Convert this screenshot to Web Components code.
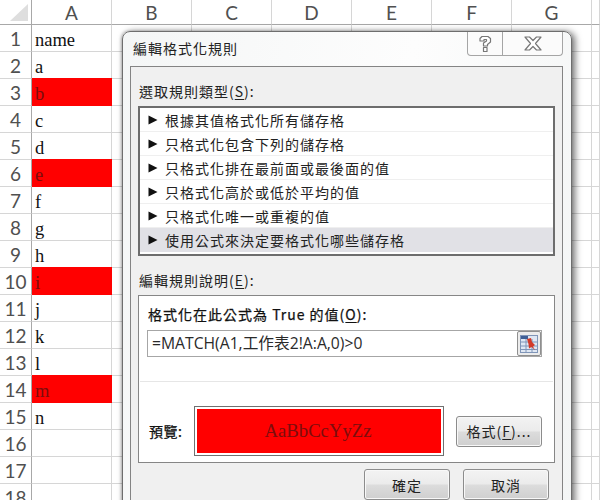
<!DOCTYPE html>
<html lang="zh-Hant">
<head>
<meta charset="utf-8">
<title>編輯格式化規則</title>
<style>
  html, body { margin: 0; height: 500px; overflow: hidden; background: #fff; }
</style>
</head>
<body>
<excel-sheet>
  <rule-dialog>
    <rule-item>根據其值格式化所有儲存格</rule-item>
    <rule-item>只格式化包含下列的儲存格</rule-item>
    <rule-item>只格式化排在最前面或最後面的值</rule-item>
    <rule-item>只格式化高於或低於平均的值</rule-item>
    <rule-item>只格式化唯一或重複的值</rule-item>
    <rule-item selected>使用公式來決定要格式化哪些儲存格</rule-item>
  </rule-dialog>
</excel-sheet>

<script>
const UI_FONT = `"Noto Sans CJK TC", "Noto Sans", sans-serif`;

class ExcelSheet extends HTMLElement {
  connectedCallback() {
    const names = ['name', 'a', 'b', 'c', 'd', 'e', 'f', 'g', 'h', 'i', 'j', 'k', 'l', 'm', 'n', '', '', '', ''];
    const red = [3, 6, 10, 14];
    const cols = ['A', 'B', 'C', 'D', 'E', 'F', 'G'];
    let cells = '<div class="corner"><svg width="31" height="24"><path d="M28 4V21H10Z" fill="#dedede"/></svg></div>';
    cols.forEach(c => { cells += `<div class="colhead">${c}</div>`; });
    cells += '<div class="colhead"></div>';
    names.forEach((n, i) => {
      const row = i + 1;
      cells += `<div class="rowhead">${row}</div>`;
      cells += `<div class="cell ${red.includes(row) ? 'red' : ''}">${n}</div>`;
      for (let k = 1; k <= cols.length; k++) cells += '<div class="cell"></div>';
    });
    this.attachShadow({ mode: 'open' });
    this.shadowRoot.innerHTML = `
      <style>
        :host { display: block; position: relative; width: 600px; height: 500px; overflow: hidden; background: #fff; }
        .grid { display: grid; grid-template-columns: 32px repeat(7, 80px) 8px; grid-auto-rows: 27px; grid-template-rows: 25px; }
        .corner, .colhead, .rowhead { box-sizing: border-box; min-width: 0; overflow: hidden; font: 19px Lato, sans-serif; color: #505050; display: flex; align-items: center; justify-content: center; }
        .corner { border-right: 1px solid #a8a8a8; border-bottom: 1px solid #a8a8a8; }
        .colhead { border-right: 1px solid #d6d6d6; border-bottom: 1px solid #a8a8a8; }
        .rowhead { padding-top: 1px; border-right: 1px solid #a8a8a8; border-bottom: 1px solid #d6d6d6; }
        .cell { box-sizing: border-box; min-width: 0; border-right: 1px solid #d6d6d6; border-bottom: 1px solid #d6d6d6; padding: 1px 0 0 3px; font: 18.5px/29px "Liberation Serif", serif; color: #111; }
        .red { background: #f00; border-color: #f00; box-shadow: 0 -1px 0 #f00; color: #7c0d0d; }
      </style>
      <div class="grid">${cells}</div>
      <slot></slot>`;
  }
}

class RuleDialog extends HTMLElement {
  connectedCallback() {
    this.attachShadow({ mode: 'open' });
    this.shadowRoot.innerHTML = `
      <style>
        :host { display: block; position: absolute; left: 122px; top: 31px; width: 450px; height: 490px; font: 14px/20px ${UI_FONT}; letter-spacing: 1px; color: #222; }
        u { text-underline-offset: 2px; }
        .frame { box-sizing: border-box; height: 100%; padding: 0 8px 0 7px; border: 1px solid #6e6e6e; border-radius: 8px 8px 0 0; background: linear-gradient(100deg, #f4f6f6, #fdfdfd 55%, #f3f5f5); box-shadow: 3px 1px 7px rgba(0, 0, 0, .55), -1px 0 3px rgba(0, 0, 0, .25); }
        .titlebar { display: flex; height: 34px; }
        .title { padding: 6px 0 0 3px; }
        .caption { display: flex; margin-left: auto; margin-right: 0; height: 23px; border: 1px solid #a5a5a5; border-top: 0; border-radius: 0 0 4px 4px; background: #fbfbfb; }
        .caption div { display: flex; align-items: center; justify-content: center; }
        .help { width: 34px; border-right: 1px solid #a5a5a5; }
        .close { width: 59px; }
        .client { box-sizing: border-box; height: 460px; padding: 0 7px 0 7px; border: 1px solid #848484; background: #f0f0f0; }
        .section { height: 39px; box-sizing: border-box; padding: 14px 0 0 1px; }
        .group { box-sizing: border-box; height: 168px; border: 1px solid #868686; background: #fff; }
        .heading { padding: 8px 0 6px 9px; color: #111; -webkit-text-stroke: .25px #111; }
        .field { display: flex; height: 27px; margin: 0 12px 0 8px; box-sizing: border-box; border: 1px solid #a6a6a6; }
        .formula { flex: 1; padding-left: 4px; font: 15.7px/25px "Open Sans", "Noto Sans CJK TC", sans-serif; letter-spacing: 0; color: #2a2a2a; }
        .picker { width: 24px; box-sizing: border-box; border: 1px solid #8f8f8f; border-radius: 2px; background: #ececec; display: flex; align-items: center; justify-content: center; }
        .divider { height: 1px; margin: 24px 1px 0; background: #e6e6e6; }
        .preview { display: flex; align-items: center; margin-top: 24px; padding-left: 10px; }
        .preview-label { width: 45px; letter-spacing: .5px; color: #111; -webkit-text-stroke: .25px #111; }
        .swatch { box-sizing: border-box; width: 250px; height: 50px; padding: 2px; border: 1px solid #707070; background: #fff; }
        .swatch div { height: 100%; padding-right: 2px; box-sizing: border-box; background: #f00; color: #7c0d0d; text-align: center; font: 18.7px/44px "Liberation Serif", serif; letter-spacing: 0; }
        .gap { width: 12px; }
        .footer { display: flex; justify-content: flex-end; gap: 13px; margin: 6px 6px 0 0; }
      </style>
      <div class="frame">
        <div class="titlebar">
          <div class="title">編輯格式化規則</div>
          <div class="caption">
            <div class="help"><svg width="14" height="18" viewBox="0 0 14 18"><path d="M2 6V3.500L4 1.500H10L12.500 3.500V7L9.500 9.500V11H5.500V8L8.500 6V4.500H6V6ZM5.500 12.500H9V16.500H5.500Z" fill="#fff" stroke="#777" stroke-width="1.200" stroke-linejoin="round"/></svg></div>
            <div class="close"><svg width="18" height="15" viewBox="0 0 18 15"><path d="M1 1H5.500L9 4.500L12.500 1H17L11.500 7.500L17 14H12.500L9 10.500L5.500 14H1L6.500 7.500Z" fill="#fff" stroke="#777" stroke-width="1.200" stroke-linejoin="round"/></svg></div>
          </div>
        </div>
        <div class="client">
          <div class="section">選取規則類型(<u>S</u>):</div>
          <rule-list><slot></slot></rule-list>
          <div class="section">編輯規則說明(<u>E</u>):</div>
          <div class="group">
            <div class="heading">格式化在此公式為 True 的值(<u>O</u>):</div>
            <div class="field">
              <div class="formula">=MATCH(A1,工作表2!A:A,0)&gt;0</div>
              <div class="picker">
                <svg width="18" height="18" viewBox="0 0 18 18">
                  <rect x=".5" y=".5" width="17" height="17" fill="#dfe7f3" stroke="#7f95b8"/>
                  <rect x="1" y="1" width="7" height="3" fill="#3f5f96"/>
                  <path d="M1 7H17M1 11H17M1 14.500H17M6 4V17M12 4V17" stroke="#7f95b8" fill="none"/>
                  <path d="M7 4L11 3L12 7L15 10L13 11.500L15 15L11.500 12L9 13.500L8.500 9Z" fill="#d23a2a"/>
                </svg>
              </div>
            </div>
            <div class="divider"></div>
            <div class="preview">
              <div class="preview-label">預覽:</div>
              <div class="swatch"><div>AaBbCcYyZz</div></div>
              <div class="gap"></div>
              <win-button>格式(<u>F</u>)...</win-button>
            </div>
          </div>
          <div class="footer">
            <win-button>確定</win-button>
            <win-button>取消</win-button>
          </div>
        </div>
      </div>`;
  }
}

class RuleList extends HTMLElement {
  connectedCallback() {
    this.attachShadow({ mode: 'open' });
    this.shadowRoot.innerHTML = `
      <style>
        :host { display: block; box-sizing: border-box; height: 150px; padding-bottom: 2px; border: 2px solid #6d6d6d; background: #fff; }
      </style>
      <slot></slot>`;
  }
}

class RuleItem extends HTMLElement {
  connectedCallback() {
    this.attachShadow({ mode: 'open' });
    this.shadowRoot.innerHTML = `
      <style>
        :host { display: flex; box-sizing: border-box; height: 24px; align-items: center; padding-left: 8px; border-bottom: 1px solid #efefef; font: 14px/20px ${UI_FONT}; letter-spacing: 1px; color: #222; }
        :host([selected]) { background: #e1e1e6; border-bottom: 0; }
        svg { margin-right: 7px; flex: none; }
      </style>
      <svg width="10" height="10" viewBox="0 0 10 10"><path d="M0.500 0.500L9.500 5L0.500 9.500Z" fill="#111"/></svg>
      <slot></slot>`;
  }
}

class WinButton extends HTMLElement {
  connectedCallback() {
    this.attachShadow({ mode: 'open' });
    this.shadowRoot.innerHTML = `
      <style>
        :host { display: flex; box-sizing: border-box; width: 86px; height: 31px; align-items: center; justify-content: center; border: 1px solid #8c8c8c; border-radius: 3px; background: linear-gradient(#f3f3f3, #ebebeb 48%, #dcdcdc 52%, #cfcfcf); box-shadow: inset 0 0 0 1px #f8f8f8; font: 14px/20px ${UI_FONT}; letter-spacing: 1px; color: #222; }
      </style>
      <slot></slot>`;
  }
}

customElements.define('excel-sheet', ExcelSheet);
customElements.define('rule-dialog', RuleDialog);
customElements.define('rule-list', RuleList);
customElements.define('rule-item', RuleItem);
customElements.define('win-button', WinButton);
</script>
</body>
</html>
